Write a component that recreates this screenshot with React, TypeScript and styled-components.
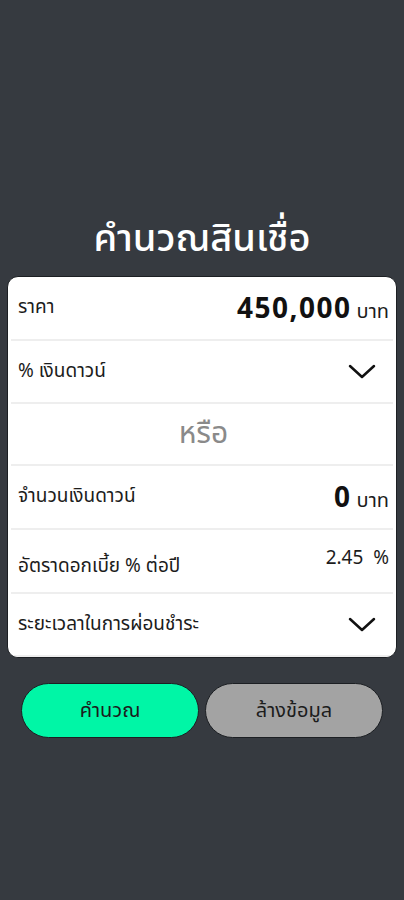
import React from 'react';
import styled, { createGlobalStyle } from 'styled-components';

const GlobalStyle = createGlobalStyle`
  html, body {
    margin: 0;
    padding: 0;
    background: #363a40;
  }
  body {
    font-family: 'Noto Sans', 'Noto Sans Thai', 'Liberation Sans', sans-serif;
  }
`;

const ChevronDown = () => (
  <svg width='30' height='20' viewBox='0 0 30 20' fill='none'>
    <path d='M3 5 L15 16 L27 5' stroke='#111' strokeWidth='2.5' strokeLinecap='round' strokeLinejoin='round' />
  </svg>
);

interface RowProps {
  label: string;
  value?: string;
  unit?: string;
}

const AmountRow: React.FC<RowProps> = ({ label, value, unit }) => (
  <Row>
    <Label>{label}</Label>
    <ValueWrap>
      <Amount>{value}</Amount>
      <Unit>{unit}</Unit>
    </ValueWrap>
  </Row>
);

const SelectRow: React.FC<RowProps> = ({ label }) => (
  <Row>
    <Label>{label}</Label>
    <ChevronWrap>
      <ChevronDown />
    </ChevronWrap>
  </Row>
);

export default function App() {
  return (
    <Page>
      <GlobalStyle />
      <Title>คำนวณสินเชื่อ</Title>
      <Card>
        <AmountRow label='ราคา' value='450,000' unit='บาท' />
        <SelectRow label='% เงินดาวน์' />
        <OrRow>หรือ</OrRow>
        <AmountRow label='จำนวนเงินดาวน์' value='0' unit='บาท' />
        <RateRow>
          <RateLabel>อัตราดอกเบี้ย % ต่อปี</RateLabel>
          <RateValue>2.45&nbsp;&nbsp;%</RateValue>
        </RateRow>
        <SelectRow label='ระยะเวลาในการผ่อนชำระ' />
      </Card>
      <Buttons>
        <Button tone='primary'>คำนวณ</Button>
        <Button tone='muted'>ล้างข้อมูล</Button>
      </Buttons>
    </Page>
  );
}

const Page = styled.div`
  width: 404px;
  height: 900px;
  background: #363a40;
  display: flex;
  flex-direction: column;
  align-items: center;
  padding-top: 208px;
  box-sizing: border-box;
`;

const Title = styled.h1`
  margin: 0 0 12px 0;
  font-size: 38px;
  font-weight: 500;
  line-height: 56px;
  color: #ffffff;
`;

const Card = styled.div`
  width: 390px;
  background: #ffffff;
  border: 1px solid #1c1f23;
  border-radius: 11px;
  box-sizing: border-box;
  display: flex;
  flex-direction: column;
  overflow: hidden;
`;

const Row = styled.div`
  height: 63.5px;
  margin: 0 3px;
  padding: 0 4px 0 7px;
  display: flex;
  align-items: center;
  justify-content: space-between;
  border-bottom: 2px solid #eeeeee;
  box-sizing: border-box;

  :last-child {
    border-bottom: none;
  }
`;

const Label = styled.span`
  font-size: 19px;
  color: #1c1c1c;
`;

const ValueWrap = styled.span`
  display: flex;
  align-items: baseline;
  gap: 5px;
`;

const Amount = styled.span`
  font-size: 28px;
  font-weight: 700;
  letter-spacing: 1.5px;
  color: #111;
`;

const Unit = styled.span`
  font-size: 20px;
  color: #1c1c1c;
`;

const ChevronWrap = styled.span`
  display: flex;
  padding-right: 12px;
`;

const OrRow = styled(Row)`
  justify-content: center;
  height: 62px;
  font-size: 30px;
  color: #8a8a8a;
`;

const RateRow = styled(Row)`
  height: 64px;
`;

const RateLabel = styled(Label)`
  padding-top: 12px;
`;

const RateValue = styled.span`
  align-self: flex-start;
  padding-top: 14px;
  font-size: 19px;
  color: #1c1c1c;
`;

const Buttons = styled.div`
  width: 362px;
  margin-top: 25px;
  display: flex;
  gap: 6px;
`;

const Button = styled.button<{ tone: 'primary' | 'muted' }>`
  flex: 1;
  height: 55px;
  border: 1px solid #1c1f23;
  border-radius: 28px;
  font-family: inherit;
  font-size: 20px;
  color: #1c1c1c;
  background: ${({ tone }) => (tone === 'primary' ? '#00f6a6' : '#a3a3a3')};
`;
